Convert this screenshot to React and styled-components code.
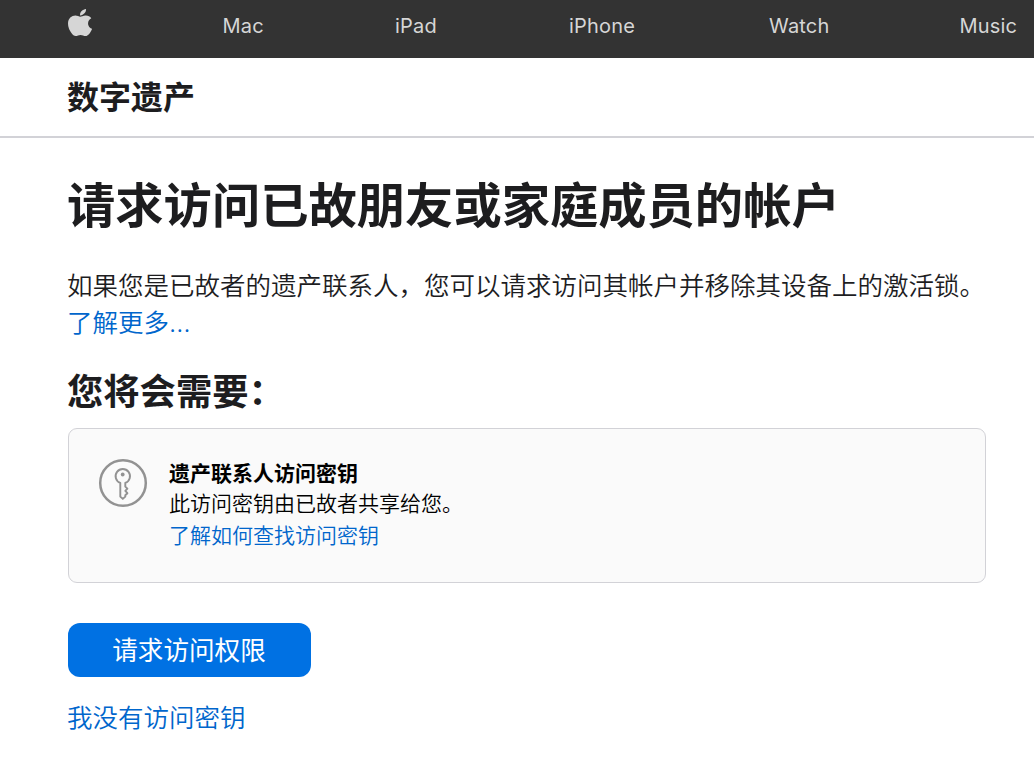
import React from 'react';
import styled, { createGlobalStyle } from 'styled-components';

const Global = createGlobalStyle`
  *{box-sizing:border-box}
  body{margin:0;background:#fff;overflow:hidden;color:#1d1d1f;font-family:Inter,"Noto Sans CJK SC",sans-serif}
  h1,h2,p{margin:0}
  a{color:#06c;text-decoration:none}
`;
const Nav = styled.nav`
  height:58px;background:#333;color:#d6d6d6;display:flex;align-items:flex-start;padding:9px 17px 0 68px;
`;
const AppleLogo = styled.svg`width:24px;height:27px;fill:#d6d6d6;flex:none;`;
const NavLink = styled.span`
  font-size:20px;line-height:34px;letter-spacing:.2px;white-space:nowrap;margin-left:${p => p.$gap}px;width:${p => p.$w}px;flex:none;
`;
const TitleBar = styled.header`height:80px;border-bottom:2px solid #d2d2d7;padding-left:67px;`;
const Line = styled.div`
  font-size:${p => p.$size}px;line-height:${p => p.$lh}px;font-weight:${p => p.$weight || 350};white-space:nowrap;
  margin-top:${p => p.$top || 0}px;
`;
const Main = styled.main`padding:0 48px 0 67px;`;
const Card = styled.section`
  margin:12px 0 0 1px;height:155px;border:1px solid #d2d2d7;border-radius:9px;background:#fafafa;color:#000;
  display:flex;padding:29px 29px;
`;
const KeyIcon = styled.svg`width:50px;height:50px;flex:none;margin-right:21px;`;
const Button = styled.button`
  display:block;margin:40px 0 0 1px;width:243px;height:54px;border:0;border-radius:12px;background:#0071e3;color:#fff;
  font:400 25.6px/54px Inter,"Noto Sans CJK SC",sans-serif;padding:1px 1px 0 0;
`;

export default function App() {
  return <>
    <Global />
    <Nav>
      <AppleLogo viewBox="4 32 376 448" preserveAspectRatio="none"><path d="M318.7 268.7c-.2-36.7 16.4-64.4 50-84.8-18.8-26.9-47.2-41.7-84.7-44.6-35.5-2.8-74.3 20.7-88.5 20.7-15 0-49.4-19.7-76.4-19.7C63.3 141.2 4 184.8 4 273.5q0 39.3 14.4 81.2c12.8 36.7 59 126.7 107.2 125.2 25.2-.6 43-17.9 75.8-17.9 31.8 0 48.3 17.9 76.4 17.9 48.6-.7 90.4-82.5 102.6-119.3-65.2-30.7-61.7-90-61.7-91.900zm-56.600-164.200c27.300-32.400 24.800-61.900 24-72.500-24.100 1.400-52 16.400-67.900 34.900-17.500 19.800-27.800 44.300-25.600 71.900 26.100 2 49.900-11.400 69.500-34.300z"/></AppleLogo>
      <NavLink $gap={130.5} $w={40}>Mac</NavLink>
      <NavLink $gap={132.5} $w={42}>iPad</NavLink>
      <NavLink $gap={132} $w={67}>iPhone</NavLink>
      <NavLink $gap={133} $w={61}>Watch</NavLink>
      <NavLink $gap={129.5} $w={57}>Music</NavLink>
    </Nav>
    <TitleBar><Line as="h2" $size={32} $lh={79} $weight={700}>数字遗产</Line></TitleBar>
    <Main>
      <Line as="h1" $size={48.3} $lh={60} $weight={700} $top={38}>请求访问已故朋友或家庭成员的帐户</Line>
      <Line as="p" $size={25.5} $lh={37} $top={31}>如果您是已故者的遗产联系人，您可以请求访问其帐户并移除其设备上的激活锁。<br /><a href="#more">了解更多…</a></Line>
      <Line as="h2" $size={36.3} $lh={48} $weight={700} $top={27}>您将会需要：</Line>
      <Card>
        <KeyIcon viewBox="0 0 50 50" fill="none" stroke="#929292">
          <circle cx="25" cy="25" r="22.8" strokeWidth="2.5"/>
          <path strokeWidth="1.9" strokeLinejoin="round" d="M22.300 24.900A7.200 7.200 0 1 1 27.300 24.900V28.600L29.400 30.600L27.300 32.900L29.400 35.200L27.300 37.200V38.600L24.800 40.900L22.300 38.600Z"/>
          <circle cx="24.700" cy="16.500" r="1.900" fill="#929292" stroke="none"/>
        </KeyIcon>
        <div>
          <Line $size={21} $lh={31} $weight={700}>遗产联系人访问密钥</Line>
          <Line $size={21} $lh={30}>此访问密钥由已故者共享给您。</Line>
          <Line $size={21} $lh={33}><a href="#key">了解如何查找访问密钥</a></Line>
        </div>
      </Card>
      <Button>请求访问权限</Button>
      <Line $size={25.5} $lh={37} $top={22}><a href="#nokey">我没有访问密钥</a></Line>
    </Main>
  </>;
}
